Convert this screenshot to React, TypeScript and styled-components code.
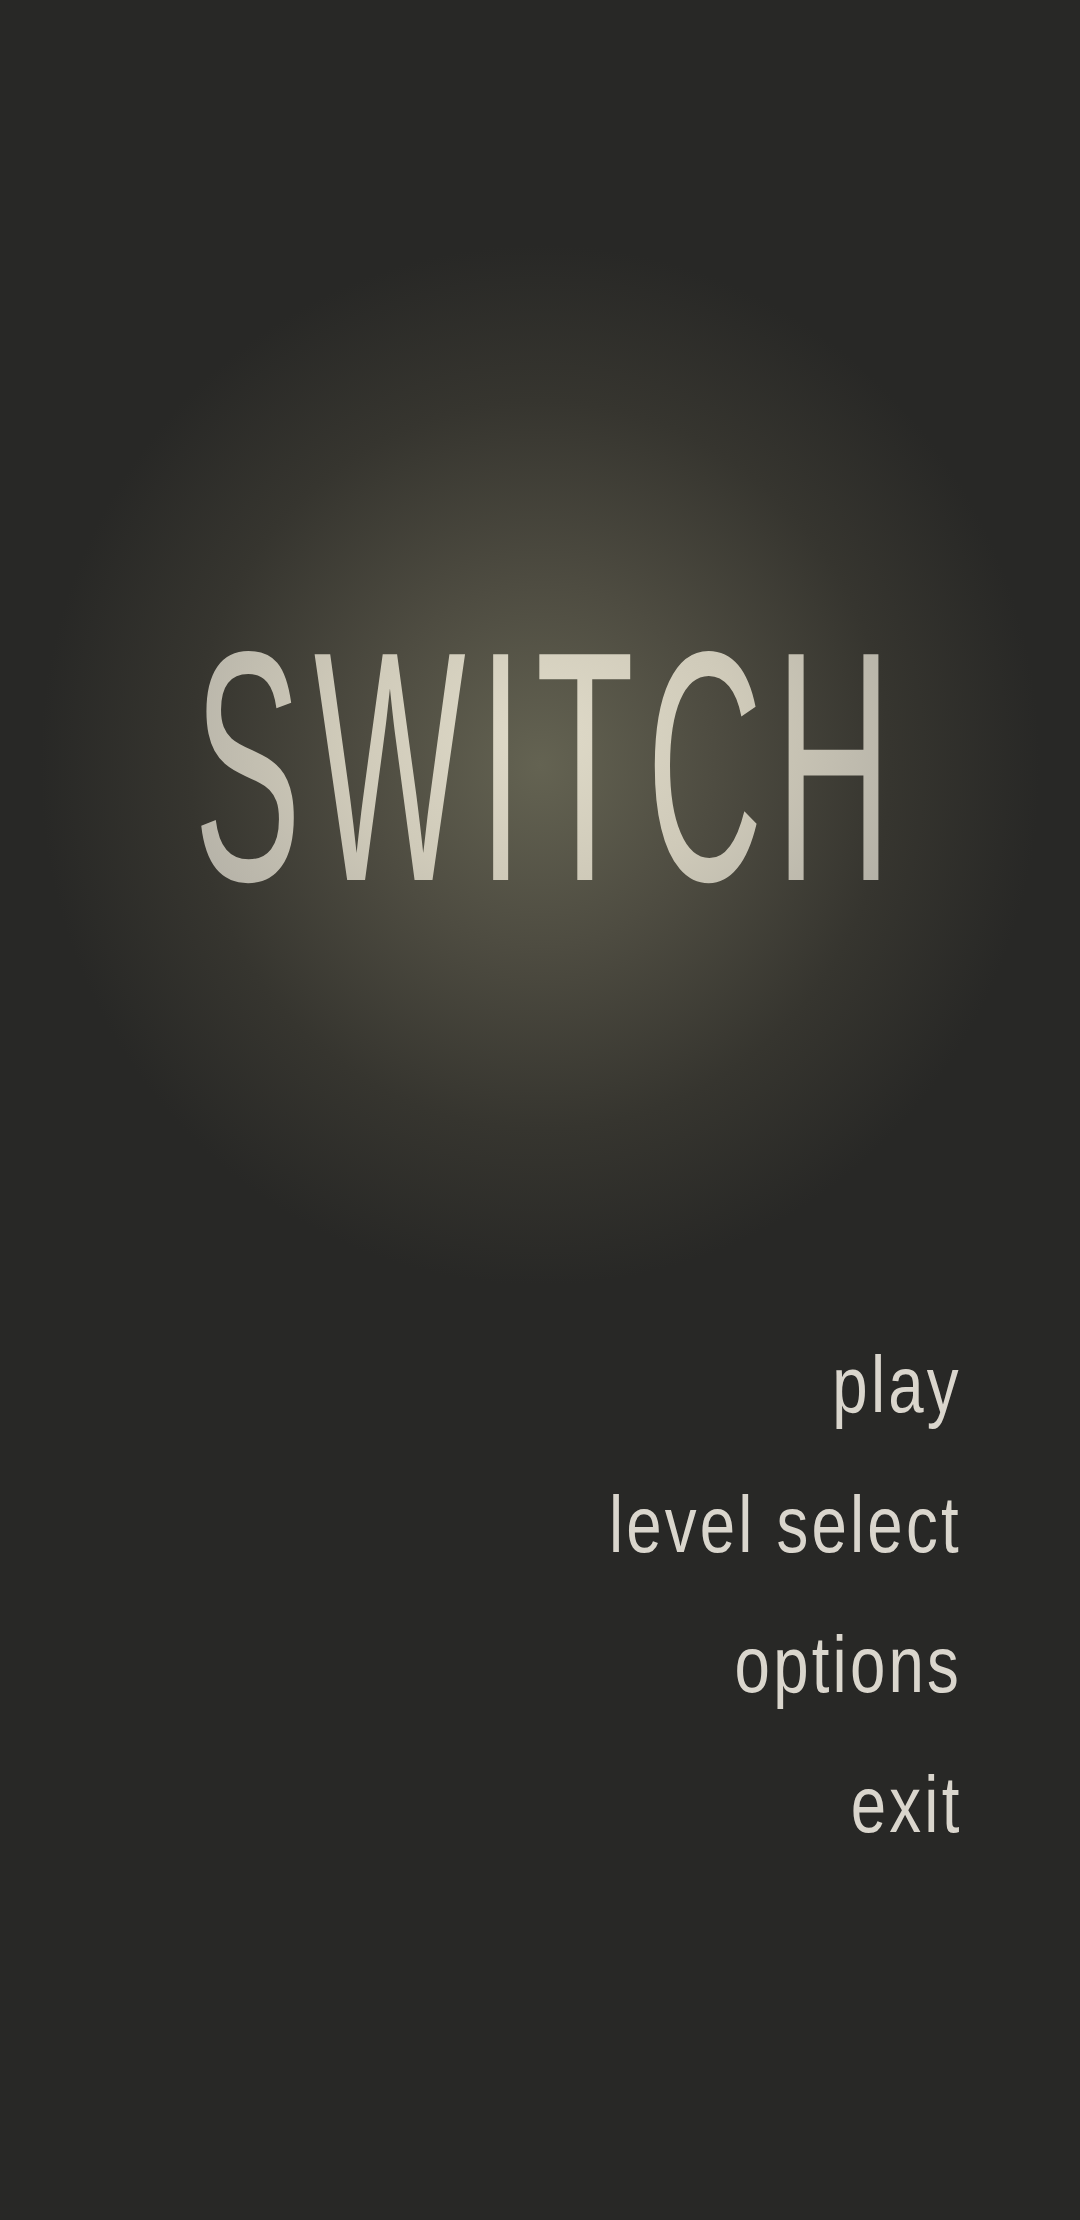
import React from "react";
import styled, { createGlobalStyle } from "styled-components";

const GlobalStyle = createGlobalStyle`
  html, body {
    margin: 0;
    padding: 0;
    background-color: #282826;
  }
`;

const Screen = styled.div`
  width: 1080px;
  height: 2220px;
  overflow: hidden;
  background-color: #282826;
  background-image: radial-gradient(
    ellipse 500px 520px at 540px 765px,
    #646352 0%,
    #4e4c41 35%,
    #36352f 70%,
    #282826 100%
  );
  display: flex;
  flex-direction: column;
  font-family: "Liberation Sans", Arial, sans-serif;
`;

const TitleArea = styled.div`
  height: 1337px;
  display: flex;
  justify-content: center;
  padding-top: 603px;
  box-sizing: border-box;
`;

const Title = styled.h1`
  margin: 0;
  font-size: 328px;
  font-weight: 400;
  line-height: 1;
  letter-spacing: 26px;
  padding-left: 38px;
  height: 328px;
  display: inline-block;
  transform: scaleX(0.49);
  transform-origin: center top;
  background: radial-gradient(
    ellipse 55% 90% at 50% 40%,
    #dfdac8 0%,
    #cfcab9 50%,
    #b3b0a6 100%
  );
  -webkit-background-clip: text;
  background-clip: text;
  color: transparent;
  white-space: nowrap;
`;

const Menu = styled.nav`
  display: flex;
  flex-direction: column;
  align-items: flex-end;
  padding-right: 118px;
  gap: 44px;
`;

const MenuItem = styled.a`
  display: block;
  font-size: 80px;
  line-height: 96px;
  height: 96px;
  color: #dad6cd;
  letter-spacing: 4px;
  white-space: nowrap;
  transform: scaleX(0.795);
  transform-origin: right center;
  cursor: pointer;
`;

const items = ["play", "level select", "options", "exit"];

export default function App() {
  return (
    <>
      <GlobalStyle />
      <Screen>
        <TitleArea>
          <Title>SWITCH</Title>
        </TitleArea>
        <Menu>
          {items.map((item) => (
            <MenuItem key={item}>{item}</MenuItem>
          ))}
        </Menu>
      </Screen>
    </>
  );
}
